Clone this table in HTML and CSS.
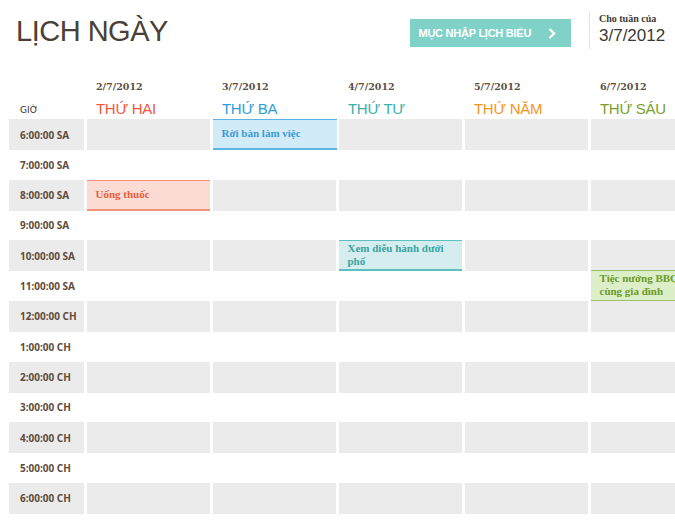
FILE: index.html
```html
<!DOCTYPE html>
<html lang="vi">
<head>
<meta charset="utf-8">
<title>Lịch ngày</title>
<link rel="stylesheet" href="styles.css">
</head>
<body>
<div class="page">
  <header class="topbar">
    <h1 class="title">LỊCH NGÀY</h1>
    <div class="entry-btn">
      <span>MỤC NHẬP LỊCH BIỂU</span>
      <svg class="chev" width="8" height="11" viewBox="0 0 8 11"><polyline points="1.5,1 6.2,5.5 1.5,10" fill="none" stroke="#fff" stroke-width="2.2"/></svg>
    </div>
    <div class="divider"></div>
    <div class="week">
      <div class="week-label">Cho tuần của</div>
      <div class="week-date">3/7/2012</div>
    </div>
  </header>

  <div class="schedule">
    <div class="hd hd-time">GIỜ</div>
    <div class="hd"><div class="hd-date">2/7/2012</div><div class="hd-day mon">THỨ HAI</div></div>
    <div class="hd"><div class="hd-date">3/7/2012</div><div class="hd-day tue">THỨ BA</div></div>
    <div class="hd"><div class="hd-date">4/7/2012</div><div class="hd-day wed">THỨ TƯ</div></div>
    <div class="hd"><div class="hd-date">5/7/2012</div><div class="hd-day thu">THỨ NĂM</div></div>
    <div class="hd"><div class="hd-date">6/7/2012</div><div class="hd-day fri">THỨ SÁU</div></div>

    <div class="time g">6:00:00 SA</div>
    <div class="cell g"></div>
    <div class="ev blue">Rời bàn làm việc</div>
    <div class="cell g"></div><div class="cell g"></div><div class="cell g"></div>

    <div class="time">7:00:00 SA</div>
    <div class="cell"></div><div class="cell"></div><div class="cell"></div><div class="cell"></div><div class="cell"></div>

    <div class="time g">8:00:00 SA</div>
    <div class="ev pink">Uống thuốc</div>
    <div class="cell g"></div><div class="cell g"></div><div class="cell g"></div><div class="cell g"></div>

    <div class="time">9:00:00 SA</div>
    <div class="cell"></div><div class="cell"></div><div class="cell"></div><div class="cell"></div><div class="cell"></div>

    <div class="time g">10:00:00 SA</div>
    <div class="cell g"></div><div class="cell g"></div>
    <div class="ev teal">Xem diễu hành dưới phố</div>
    <div class="cell g"></div><div class="cell g"></div>

    <div class="time">11:00:00 SA</div>
    <div class="cell"></div><div class="cell"></div><div class="cell"></div><div class="cell"></div>
    <div class="ev green over">Tiệc nướng BBQ cùng gia đình</div>

    <div class="time g">12:00:00 CH</div>
    <div class="cell g"></div><div class="cell g"></div><div class="cell g"></div><div class="cell g"></div><div class="cell g"></div>

    <div class="time">1:00:00 CH</div>
    <div class="cell"></div><div class="cell"></div><div class="cell"></div><div class="cell"></div><div class="cell"></div>

    <div class="time g">2:00:00 CH</div>
    <div class="cell g"></div><div class="cell g"></div><div class="cell g"></div><div class="cell g"></div><div class="cell g"></div>

    <div class="time">3:00:00 CH</div>
    <div class="cell"></div><div class="cell"></div><div class="cell"></div><div class="cell"></div><div class="cell"></div>

    <div class="time g">4:00:00 CH</div>
    <div class="cell g"></div><div class="cell g"></div><div class="cell g"></div><div class="cell g"></div><div class="cell g"></div>

    <div class="time">5:00:00 CH</div>
    <div class="cell"></div><div class="cell"></div><div class="cell"></div><div class="cell"></div><div class="cell"></div>

    <div class="time g">6:00:00 CH</div>
    <div class="cell g"></div><div class="cell g"></div><div class="cell g"></div><div class="cell g"></div><div class="cell g"></div>
  </div>
</div>
</body>
</html>
```

FILE: styles.css
```css
html, body {
  margin: 0;
  padding: 0;
  background: #fff;
  overflow: hidden;
}

.page {
  width: 675px;
  height: 520px;
  overflow: hidden;
}

/* ---------- top bar ---------- */
.topbar {
  display: flex;
  align-items: flex-start;
  height: 70px;
}

.title {
  flex: 1;
  margin: 14.7px 0 0 16px;
  font-family: "Liberation Sans", Arial, sans-serif;
  font-size: 29px;
  line-height: 32px;
  font-weight: normal;
  letter-spacing: -0.5px;
  color: #4a4036;
}

.entry-btn {
  margin-top: 19px;
  margin-right: 18px;
  width: 161px;
  height: 28px;
  box-sizing: border-box;
  padding: 0 15px 0 9px;
  background: #80d2c9;
  display: flex;
  align-items: center;
  justify-content: space-between;
  color: #fff;
  font-family: "Liberation Sans", Arial, sans-serif;
  font-weight: bold;
  font-size: 11px;
  letter-spacing: -0.25px;
}

.chev {
  display: block;
}

.divider {
  width: 1px;
  height: 37px;
  margin-top: 12px;
  background: #e2e2e2;
}

.week {
  width: 76px;
  margin-left: 9.5px;
  padding-top: 12.5px;
}

.week-label {
  font-family: "Liberation Serif", "Times New Roman", serif;
  font-weight: bold;
  font-size: 10px;
  line-height: 12px;
  color: #3d3a36;
}

.week-date {
  margin-top: 1.2px;
  font-family: "Liberation Sans", Arial, sans-serif;
  font-size: 17px;
  line-height: 20px;
  color: #3b3835;
}

/* ---------- schedule grid ---------- */
.schedule {
  display: grid;
  margin-left: 9px;
  grid-template-columns: 75px repeat(5, 123.5px);
  column-gap: 2.5px;
  grid-template-rows: 49px repeat(6, 31px 29.67px) 31px;
}

.hd {
  display: flex;
  flex-direction: column;
  justify-content: flex-end;
  padding: 0 0 2.25px 9.5px;
}

.hd-time {
  padding: 0 0 2.6px 11px;
  font-family: "DejaVu Sans", sans-serif;
  font-size: 9px;
  line-height: 11px;
  color: #333;
}

.hd-date {
  margin-bottom: 8.5px;
  font-family: "DejaVu Serif", serif;
  font-weight: bold;
  font-size: 9.5px;
  line-height: 11px;
  color: #5a5048;
}

.hd-day {
  font-family: "Liberation Sans", Arial, sans-serif;
  font-size: 15px;
  line-height: 16px;
  letter-spacing: -0.3px;
}

.mon { color: #f2573a; }
.tue { color: #2e9ddb; }
.wed { color: #3bafab; }
.thu { color: #f7941e; }
.fri { color: #7aa02b; }

.time {
  display: flex;
  align-items: center;
  padding-left: 11px;
  font-family: "Noto Sans", sans-serif;
  font-weight: bold;
  font-size: 10px;
  color: #5e4b3c;
}

.g {
  background: #ebebeb;
}

/* ---------- events ---------- */
.ev {
  display: flex;
  align-items: center;
  box-sizing: border-box;
  padding: 0 16px 0 9px;
  font-family: "Liberation Serif", "Times New Roman", serif;
  font-weight: bold;
  font-size: 11px;
  line-height: 13.6px;
  border-top: 1px solid;
  border-bottom: 2px solid;
}

.blue {
  background: #d2ebf8;
  border-color: #5db4e5;
  color: #3a9ad6;
  margin-right: -1px;
}

.pink {
  background: #fadcd5;
  border-color: #f4937b;
  color: #e8603c;
}

.teal {
  background: #d6edf0;
  border-color: #5cc0bf;
  color: #3aa3a0;
}

.green {
  background: #dcefc8;
  border-color: #98c06c;
  color: #6b9a2a;
}

.over {
  margin: -1.3px 0 -0.7px;
}
```
